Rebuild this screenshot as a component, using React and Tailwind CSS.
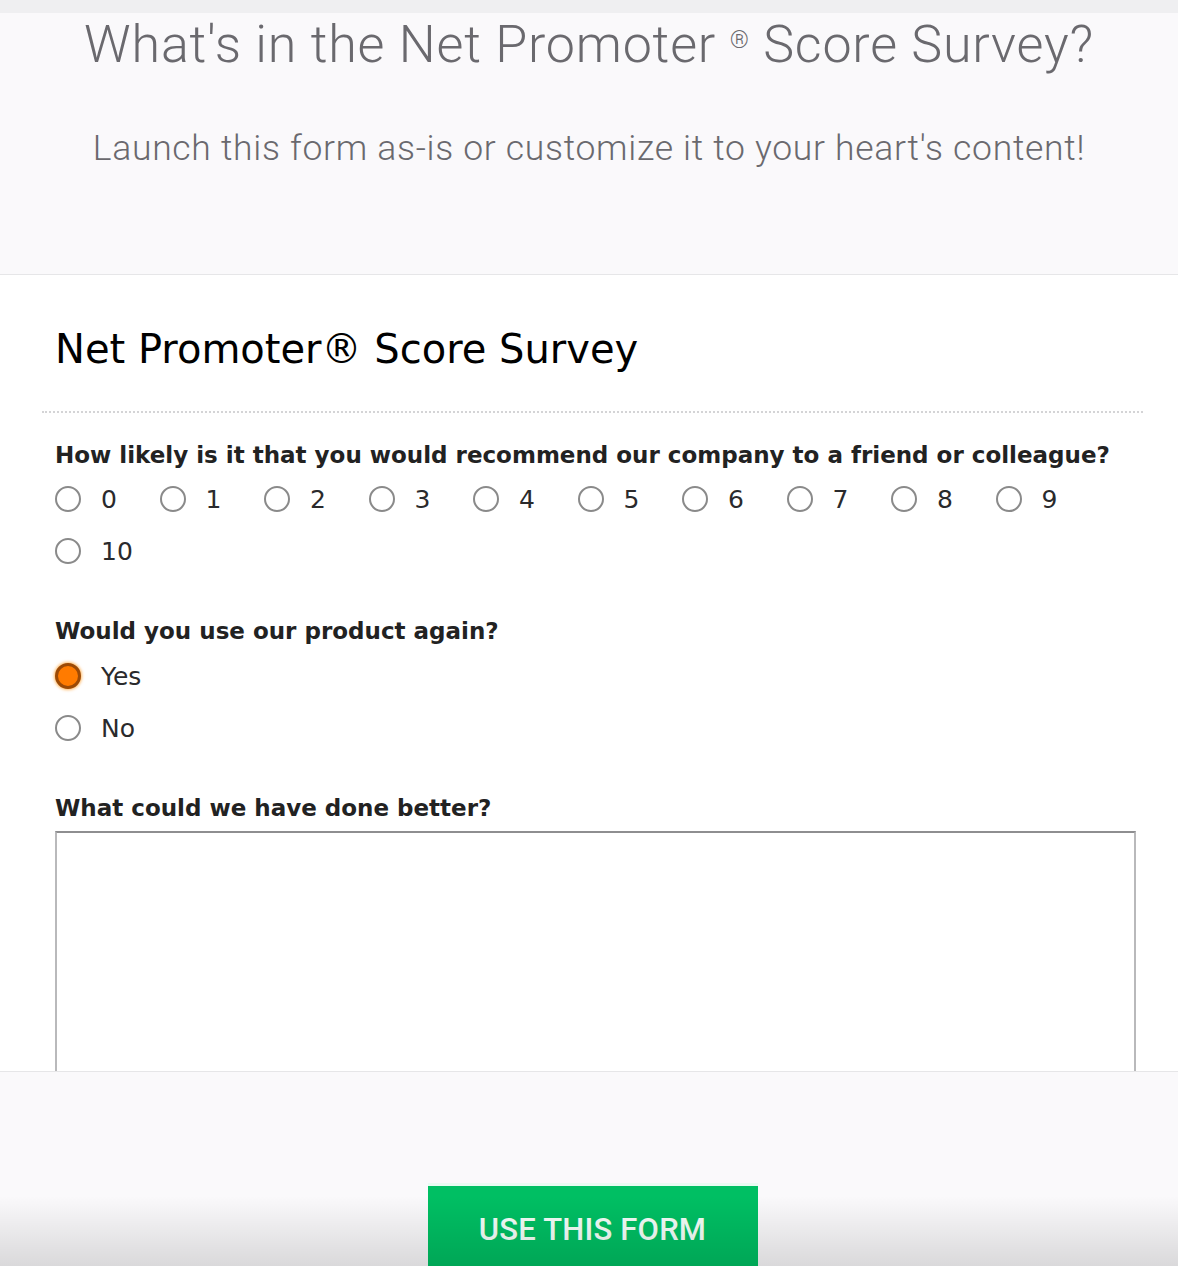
import React from "react";

const Radio = ({ checked }) =>
    checked ? (
        <span className="inline-block w-[26px] h-[26px] rounded-full bg-[#ff7b00] border-[3px] border-[#9c4a06] shadow-[0_0_3px_1px_rgba(255,140,0,0.6)] shrink-0" />
    ) : (
        <span className="inline-block w-[26px] h-[26px] rounded-full border-2 border-[#8a8a8a] bg-white shrink-0" />
    );

const Option = ({ label, checked, className = "" }) => (
    <label className={`flex items-center gap-[20px] h-[26px] ${className}`}>
        <Radio checked={checked} />
        <span className="text-[25px] text-[#2a2a2c] leading-none">{label}</span>
    </label>
);

export default function App() {
    const scores = [0, 1, 2, 3, 4, 5, 6, 7, 8, 9];

    return (
        <div className="relative h-[1266px] overflow-hidden bg-[#faf9fb] font-['DejaVu_Sans',sans-serif]">
            {/* barra de cima */}
            <div className="h-[13px] bg-[#efeff1]" />

            {/* cabeçalho */}
            <div className="h-[261px] text-center font-['Roboto',sans-serif] font-light text-[#6a696e]">
                <h1 className="text-[52px] leading-none pt-[6px] tracking-[0.8px]">
                    What's in the Net Promoter <span className="text-[24px] relative -top-[14px]">®</span> Score Survey?
                </h1>
                <p className="text-[35.5px] leading-none mt-[60px] tracking-[0.7px]">
                    Launch this form as-is or customize it to your heart's content!
                </p>
            </div>

            {/* formulário */}
            <div className="h-[798px] bg-white border-y border-[#e6e6e8] overflow-hidden">
                <div className="px-[55px] pt-[54px]">
                    <h2 className="text-[40px] leading-none text-black">Net Promoter® Score Survey</h2>
                </div>
                <div className="ml-[42px] mr-[35px] mt-[42px] border-t-2 border-dotted border-[#d4d4d6]" />

                <div className="px-[55px]">
                    <h3 className="mt-[31px] text-[23px] font-bold text-[#222] leading-none">
                        How likely is it that you would recommend our company to a friend or colleague?
                    </h3>
                    <div className="mt-[19px] flex flex-wrap w-[1050px] gap-y-[26px]">
                        {scores.map((n) => (
                            <Option key={n} label={n} className="w-[104.5px]" />
                        ))}
                        <Option label={10} className="w-[104.5px]" />
                    </div>

                    <h3 className="mt-[56px] text-[23px] font-bold text-[#222] leading-none">
                        Would you use our product again?
                    </h3>
                    <div className="mt-[20px] flex flex-col gap-[26px]">
                        <Option label="Yes" checked />
                        <Option label="No" />
                    </div>

                    <h3 className="mt-[56px] text-[23px] font-bold text-[#222] leading-none">
                        What could we have done better?
                    </h3>
                    <textarea className="mt-[11px] block w-[1081px] h-[300px] border-2 border-[#b9b9bb] border-t-[#8e8e90] bg-white resize-none" />
                </div>
            </div>

            {/* botão */}
            <div className="flex justify-center pt-[111px] pl-[7px]">
                <button className="w-[330px] h-[100px] bg-[#00bf63] border-t-[3px] border-[#e9fbf2] text-[#f4fff9] font-['Roboto',sans-serif] font-medium text-[31px] tracking-[0.2px] pb-[8px]">
                    USE THIS FORM
                </button>
            </div>

            {/* sombra no rodapé */}
            <div className="pointer-events-none absolute left-0 right-0 bottom-0 h-[70px] bg-gradient-to-b from-transparent to-[rgba(0,0,0,0.13)]" />
        </div>
    );
}
